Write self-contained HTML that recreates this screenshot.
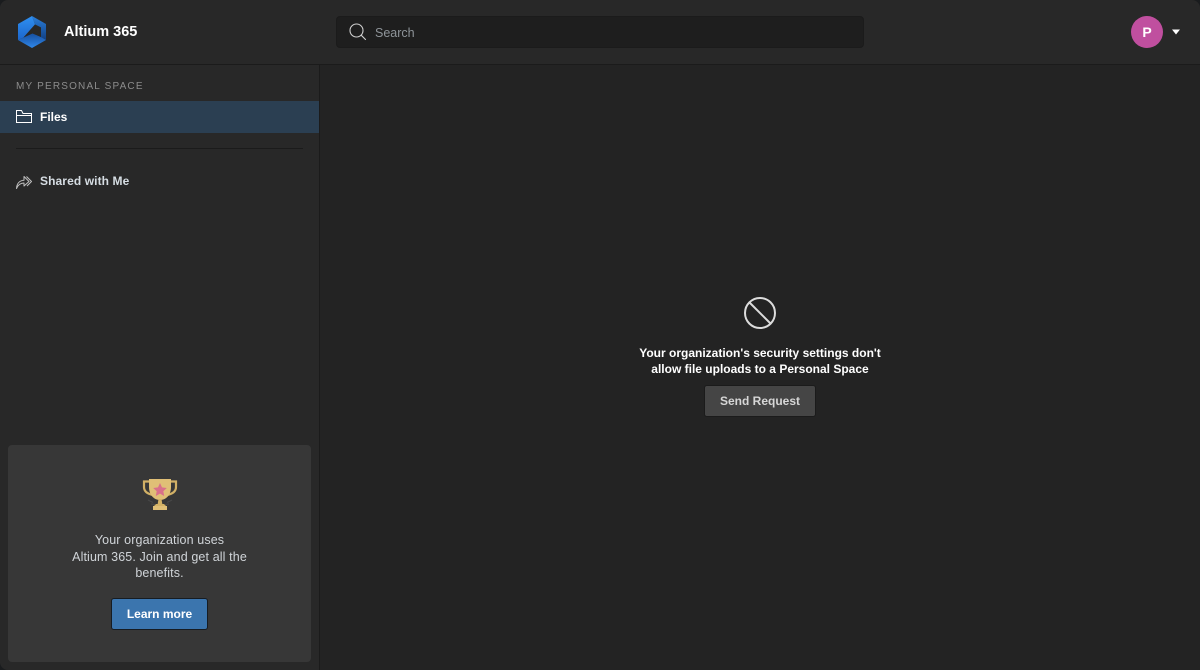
<!DOCTYPE html>
<html lang="en">
<head>
<meta charset="utf-8">
<title>Altium 365</title>
<style>
html,body{margin:0;padding:0;width:1200px;height:670px;overflow:hidden;background:#1a1c1e;}
*{box-sizing:border-box;}
body{font-family:"Liberation Sans",sans-serif;position:relative;}
.app{position:absolute;left:0;top:0;width:1200px;height:670px;background:#232323;border-radius:8px 8px 0 8px;overflow:hidden;}
.abs{position:absolute;white-space:nowrap;}
.header{position:absolute;left:0;top:0;width:1200px;height:65px;background:#282828;border-bottom:1px solid #1b1b1b;}
.sidebar{position:absolute;left:0;top:65px;width:320px;height:605px;background:#282828;border-right:1px solid #1b1b1b;}
.search{position:absolute;left:336px;top:16px;width:528px;height:32px;background:#1e1e1e;border:1px solid #1b1b1b;border-radius:4px;}
.active{position:absolute;left:0;top:101px;width:319px;height:32px;background:#2b3f52;}
.divider{position:absolute;left:16px;top:148px;width:287px;height:1px;background:#1b1b1b;}
.card{position:absolute;left:8px;top:445px;width:303px;height:217px;background:#373737;border-radius:4px;}
.btn{position:absolute;text-align:center;border-radius:3px;font-weight:bold;}
</style>
</head>
<body>
<div class="app">
  <div class="header"></div>
  <div class="sidebar"></div>

  <svg class="abs" style="left:16px;top:15px" width="32" height="34" viewBox="0 0 32 34">
    <defs>
      <linearGradient id="g1" x1="0" y1="0" x2="0" y2="1"><stop offset="0" stop-color="#2f90f2"/><stop offset="1" stop-color="#1c66cc"/></linearGradient>
      <linearGradient id="g2" x1="0" y1="0" x2="0" y2="1"><stop offset="0" stop-color="#174f9f"/><stop offset="1" stop-color="#2f88ea"/></linearGradient>
      <linearGradient id="g3" x1="0" y1="0" x2="0" y2="1"><stop offset="0" stop-color="#2a7fdc"/><stop offset="1" stop-color="#123f82"/></linearGradient>
    </defs>
    <path d="M16 1 L30 9 V25 L25 22 V12.5 L19 9.5 Z" fill="url(#g3)"/>
    <path d="M16 1 L2 9 V25 L7.5 22.5 L19 9.5 Z" fill="url(#g1)"/>
    <path d="M2 25 L16 33 L30 25 L25 22 L16.5 18.5 L7.5 22.5 Z" fill="url(#g2)"/>
    <path d="M19 9.5 L25 12.5 V22 L16.5 18 L7.5 22.5 Z" fill="#282828"/>
  </svg>
  <div class="abs" style="left:64px;top:23px;font-size:14.5px;line-height:18px;font-weight:bold;color:#fff;">Altium 365</div>

  <div class="search"></div>
  <svg class="abs" style="left:349px;top:23px" width="18" height="18" viewBox="0 0 18 18" fill="none" stroke="#cfcfcf" stroke-width="1.1">
    <circle cx="7.5" cy="7.5" r="6.5"/><path d="M12.2 12.2 L16.5 16.5" stroke-linecap="round"/>
  </svg>
  <div class="abs" style="left:375px;top:26px;font-size:12.5px;line-height:15px;color:#8e9499;">Search</div>

  <div class="abs" style="left:1131px;top:16px;width:32px;height:32px;border-radius:50%;background:#c04f9f;color:#fff;font-size:14px;font-weight:bold;line-height:33px;text-align:center;">P</div>
  <svg class="abs" style="left:1172px;top:29px" width="8" height="6" viewBox="0 0 8 6"><path d="M0 0.5 H8 L4 5.5 Z" fill="#fff"/></svg>

  <div class="abs" style="left:16px;top:80px;font-size:10px;line-height:13px;letter-spacing:1.18px;color:#8c8c8c;">MY PERSONAL SPACE</div>
  <div class="active"></div>
  <svg class="abs" style="left:16px;top:110px" width="16" height="13" viewBox="0 0 16 13" fill="none" stroke="#fff" stroke-width="1">
    <path d="M.5 12.5 V.5 H5.5 L7 3.5 H15.5 V12.5 Z"/><path d="M.5 5.5 H15.5"/>
  </svg>
  <div class="abs" style="left:40px;top:110px;font-size:12px;line-height:15px;font-weight:bold;color:#fff;">Files</div>
  <div class="divider"></div>
  <svg class="abs" style="left:16px;top:175px" width="16" height="14" viewBox="0 0 16 14" fill="none" stroke="#c0c0c0" stroke-width="1" stroke-linejoin="round">
    <path d="M.5 13.5 C.8 8.5 3.5 5.5 8 5.3 V1.5 L13 6.5 L8 11 V8 C4.5 8 2 10 .5 13.5 Z"/><path d="M10.5 1.5 L15.5 6.5 L11 11"/>
  </svg>
  <div class="abs" style="left:40px;top:174px;font-size:12px;line-height:15px;font-weight:bold;letter-spacing:.1px;color:#d6dde3;">Shared with Me</div>

  <div class="card"></div>
  <svg class="abs" style="left:142px;top:478px" width="36" height="33" viewBox="0 0 36 33">
    <path d="M6 22 L11 24.5 M30 22 L25 24.5 M9 26 L13 26.5 M27 26 L23 26.5" stroke="#484848" stroke-width="1" fill="none"/>
    <path d="M8 3.5 H2 V9 C2 14 6 16 11 17 M28 3.5 H34 V9 C34 14 30 16 25 17" fill="none" stroke="#d1b066" stroke-width="2.2"/>
    <path d="M7 1 H29 V9 C29 17 24 22 18 22 C12 22 7 17 7 9 Z" fill="#e0bf76"/>
    <path d="M16.5 21 H19.5 L20.5 27 H15.5 Z" fill="#d3b165"/>
    <path d="M14 26 H22 L24 28 H12 Z" fill="#d3b165"/>
    <path d="M11 28 H25 V32 H11 Z" fill="#e0bf76"/>
    <path d="M18 5 L20 9.4 L24.8 10 L21.3 13.2 L22.2 18 L18 15.6 L13.8 18 L14.7 13.2 L11.2 10 L16 9.4 Z" fill="#d9708a"/>
  </svg>
  <div class="abs" style="left:8px;top:532px;width:303px;text-align:center;font-size:12.5px;line-height:16.5px;letter-spacing:.12px;color:#d0d4d8;white-space:normal;">Your organization uses<br>Altium 365. Join and get all the<br>benefits.</div>
  <div class="btn abs" style="left:111px;top:598px;width:97px;height:32px;background:#3b75ae;border:1px solid #161c22;color:#fff;font-size:12px;line-height:30px;">Learn more</div>

  <svg class="abs" style="left:743px;top:296px" width="34" height="34" viewBox="0 0 34 34" fill="none" stroke="#dcdcdc" stroke-width="2">
    <circle cx="17" cy="17" r="15"/><path d="M6.5 6.5 L27.5 27.5"/>
  </svg>
  <div class="abs" style="left:600px;top:345px;width:320px;text-align:center;font-size:12px;line-height:16px;font-weight:bold;color:#fff;white-space:normal;">Your organization's security settings don't<br>allow file uploads to a Personal Space</div>
  <div class="btn abs" style="left:704px;top:385px;width:112px;height:32px;background:#454545;border:1px solid #1b1b1b;color:#d6d6d6;font-size:12px;line-height:30px;">Send Request</div>
</div>
</body>
</html>
